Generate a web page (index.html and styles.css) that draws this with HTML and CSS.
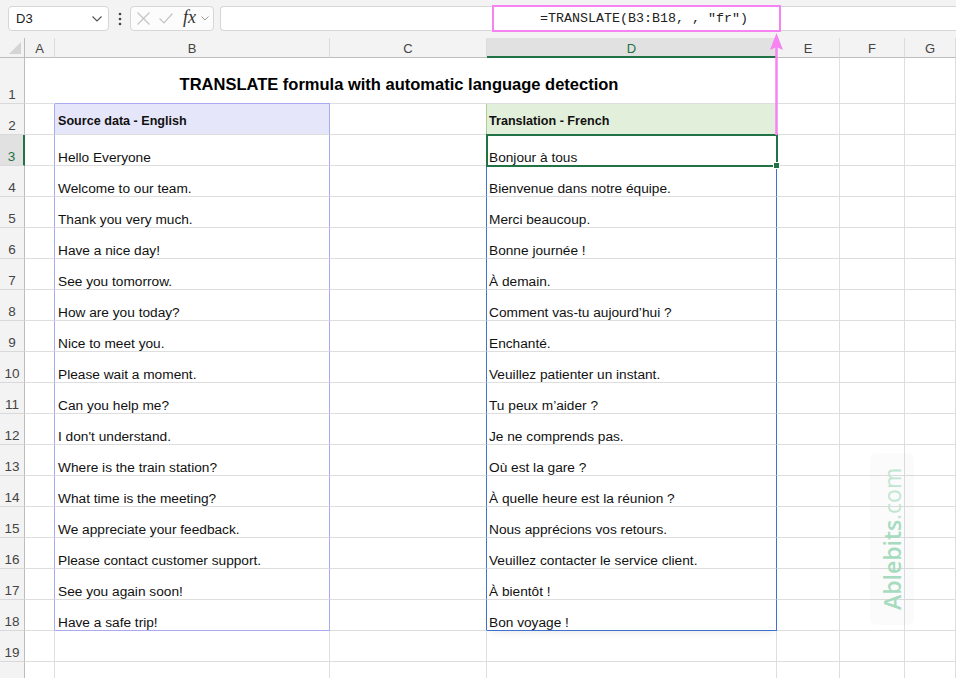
FILE: index.html
```html
<!DOCTYPE html>
<html lang="en">
<head>
    <meta charset="UTF-8">
    <meta name="viewport" content="width=device-width, initial-scale=1.0">
    <title>TRANSLATE formula</title>
    <link rel="stylesheet" href="styles.css">
</head>
<body>
    <div class="app">
        <div class="toolbar">
            <div class="name-box">
                <span>D3</span>
                <svg class="chev" width="10" height="6" viewBox="0 0 10 6"><polyline points="0.5,0.5 5,5 9.5,0.5" fill="none" stroke="#555" stroke-width="1.2"/></svg>
            </div>
            <svg class="dots" width="4" height="14" viewBox="0 0 4 14"><circle cx="2" cy="2" r="1.3" fill="#444"/><circle cx="2" cy="7" r="1.3" fill="#444"/><circle cx="2" cy="12" r="1.3" fill="#444"/></svg>
            <div class="func-box">
                <svg width="13" height="13" viewBox="0 0 13 13"><path d="M0.5 0.5 L12.5 12.5 M12.5 0.5 L0.5 12.5" stroke="#c4c4c4" stroke-width="1.2"/></svg>
                <svg width="14" height="11" viewBox="0 0 14 11"><polyline points="0.5,5.5 5,10 13.5,0.5" fill="none" stroke="#c4c4c4" stroke-width="1.2"/></svg>
                <span class="fx">fx</span>
                <svg width="8" height="5" viewBox="0 0 8 5"><polyline points="0.5,0.5 4,4 7.5,0.5" fill="none" stroke="#999" stroke-width="1"/></svg>
            </div>
            <div class="formula-input">=TRANSLATE(B3:B18, , "fr")</div>
        </div>

        <div class="sheet" id="sheet"></div>

        <div class="callout-box"></div>
        <svg class="callout-arrow" width="15" height="102" viewBox="0 0 15 102">
            <line x1="7.5" y1="12" x2="7.5" y2="102" stroke="#f783f2" stroke-width="2.5"/>
            <polygon points="7.5,0 14,17 7.5,14 1,17" fill="#f783f2"/>
        </svg>

        <div class="watermark"><span class="brand">Ablebits</span><span class="dotcom">.com</span></div>
    </div>

    <script>
        const english = [
            'Hello Everyone', 'Welcome to our team.', 'Thank you very much.', 'Have a nice day!',
            'See you tomorrow.', 'How are you today?', 'Nice to meet you.', 'Please wait a moment.',
            'Can you help me?', "I don't understand.", 'Where is the train station?', 'What time is the meeting?',
            'We appreciate your feedback.', 'Please contact customer support.', 'See you again soon!', 'Have a safe trip!'
        ];
        const french = [
            'Bonjour à tous', 'Bienvenue dans notre équipe.', 'Merci beaucoup.', 'Bonne journée !',
            'À demain.', 'Comment vas-tu aujourd’hui ?', 'Enchanté.', 'Veuillez patienter un instant.',
            'Tu peux m’aider ?', 'Je ne comprends pas.', 'Où est la gare ?', 'À quelle heure est la réunion ?',
            'Nous apprécions vos retours.', 'Veuillez contacter le service client.', 'À bientôt !', 'Bon voyage !'
        ];
        const cols = ['A', 'B', 'C', 'D', 'E', 'F', 'G'];
        const sheet = document.getElementById('sheet');

        function cell(cls, text) {
            const div = document.createElement('div');
            div.className = cls;
            if (text !== undefined) div.textContent = text;
            sheet.appendChild(div);
            return div;
        }

        cell('corner');
        cols.forEach(c => cell(c === 'D' ? 'col-head active' : 'col-head', c));

        for (let r = 1; r <= 20; r++) {
            cell(r === 3 ? 'row-head active' : 'row-head', r);

            if (r === 1) {
                cell('cell title', 'TRANSLATE formula with automatic language detection');
                cell('cell'); cell('cell'); cell('cell');
                continue;
            }

            if (r === 2) {
                cell('cell src-left');
                cell('cell src src-top src-head', 'Source data - English');
                cell('cell fr-left');
                cell('cell fr-head', 'Translation - French');
            } else if (r <= 18) {
                const last = r === 18 ? ' last' : '';
                cell('cell src-left');
                cell('cell src' + last, english[r - 3]);
                cell('cell dst-left');
                cell('cell dst' + last + (r === 3 ? ' selected' : ''), french[r - 3]);
            } else {
                cell('cell'); cell('cell'); cell('cell'); cell('cell');
            }
            cell('cell'); cell('cell'); cell('cell');
        }
    </script>
</body>
</html>
```

FILE: styles.css
```css
body {
    margin: 0;
    font-family: "Liberation Sans", Arial, sans-serif;
    background-color: #fff;
    overflow: hidden;
}

.app {
    position: relative;
    width: 956px;
    height: 678px;
    overflow: hidden;
}

/* formula bar */

.toolbar {
    height: 38px;
    background-color: #f3f3f3;
    display: flex;
    align-items: flex-start;
    padding: 6px 0 0 8px;
    box-sizing: border-box;
}

.name-box {
    width: 101px;
    height: 25px;
    box-sizing: border-box;
    background-color: #fff;
    border: 1px solid #d6d6d6;
    border-radius: 4px;
    display: flex;
    align-items: center;
    justify-content: space-between;
    padding: 0 6px 0 7px;
    font-size: 13px;
    color: #222;
}

.dots {
    margin: 6px 8px 0 9px;
}

.func-box {
    width: 84px;
    height: 25px;
    box-sizing: border-box;
    background-color: #fcfcfc;
    border: 1px solid #d6d6d6;
    border-radius: 4px;
    display: flex;
    align-items: center;
    padding: 0 3px 0 6px;
    gap: 9px;
}

.fx {
    font-family: "Liberation Serif", "Times New Roman", serif;
    font-style: italic;
    font-size: 18px;
    color: #333;
    margin: 0 -4px 3px 1px;
}

.formula-input {
    flex: 1;
    height: 25px;
    margin-left: 6px;
    box-sizing: border-box;
    background-color: #fff;
    border: 1px solid #d6d6d6;
    border-right: none;
    border-radius: 4px 0 0 4px;
    padding-left: 319px;
    font-family: "Liberation Mono", "Courier New", monospace;
    font-size: 13.33px;
    line-height: 24px;
    color: #222;
    white-space: pre;
}

/* grid */

.sheet {
    display: grid;
    grid-template-columns: 25px 30px 275px 157px 290px 63px 65px 1fr;
    grid-template-rows: 20px 46px repeat(19, 31px);
    font-size: 13.7px;
    color: #111;
}

.corner {
    background-color: #f3f3f3;
    border-right: 1px solid #bdbdbd;
    border-bottom: 1px solid #bdbdbd;
    position: relative;
}

.corner::after {
    content: "";
    position: absolute;
    right: 3px;
    bottom: 3px;
    border-style: solid;
    border-width: 0 0 12px 12px;
    border-color: transparent transparent #d4d4d4 transparent;
}

.col-head {
    background-color: #f3f3f3;
    border-right: 1px solid #dcdcdc;
    border-bottom: 1px solid #bdbdbd;
    display: flex;
    align-items: center;
    justify-content: center;
    padding-top: 2px;
    color: #444;
    font-size: 13px;
}

.col-head.active {
    background-color: #e1e1e1;
    border-bottom: 2px solid #217346;
    color: #217346;
}

.row-head {
    background-color: #f3f3f3;
    border-right: 1px solid #bdbdbd;
    border-bottom: 1px solid #d9d9d9;
    display: flex;
    align-items: flex-end;
    justify-content: center;
    padding-bottom: 1px;
    color: #444;
    font-size: 13.5px;
}

.row-head.active {
    background-color: #e1e1e1;
    border-right: 2px solid #217346;
    color: #217346;
}

.cell {
    box-sizing: border-box;
    border-right: 1px solid #dedede;
    border-bottom: 1px solid #dedede;
    display: flex;
    align-items: flex-end;
    padding: 0 3px 0 3px;
    white-space: nowrap;
    min-width: 0;
}

.title {
    grid-column: span 4;
    justify-content: center;
    font-size: 16.5px;
    font-weight: bold;
    color: #000;
    padding-bottom: 9px;
    padding-left: 0;
}

/* source range B2:B18 */

.src-left {
    border-right-color: #aaaaf0;
}

.src {
    border-right-color: #aaaaf0;
}

.src-top {
    box-shadow: 0 -1px 0 #aaaaf0;
}

.src-head {
    background-color: #e6e6fa;
    font-weight: bold;
    font-size: 12.6px;
    padding-bottom: 6px;
}

.src.last {
    border-bottom-color: #aaaaf0;
}

/* translated range D2:D18 */

.fr-left {
    border-right-color: #a9d08e;
}

.fr-head {
    background-color: #e2efda;
    border-right-color: #a9d08e;
    font-weight: bold;
    font-size: 12.6px;
    padding-bottom: 6px;
    padding-left: 2px;
}

.dst-left {
    border-right-color: #3f72d0;
}

.dst {
    border-right-color: #3f72d0;
    padding-left: 2px;
}

.dst.last {
    border-bottom-color: #3f72d0;
    box-shadow: 0 4px 8px -4px rgba(0, 0, 0, 0.12);
}

.selected {
    position: relative;
    outline: 2px solid #217346;
    outline-offset: -1px;
}

.selected::after {
    content: "";
    position: absolute;
    right: -4px;
    bottom: -4px;
    width: 5px;
    height: 5px;
    background-color: #217346;
    border: 1px solid #fff;
}

/* annotations */

.callout-box {
    position: absolute;
    left: 492px;
    top: 5px;
    width: 289px;
    height: 27px;
    box-sizing: border-box;
    border: 2px solid #f783f2;
}

.callout-arrow {
    position: absolute;
    left: 769px;
    top: 33px;
}

.watermark {
    position: absolute;
    left: 870px;
    top: 453px;
    width: 44px;
    height: 172px;
    box-sizing: border-box;
    background-color: rgba(0, 0, 0, 0.015);
    border-radius: 6px;
    writing-mode: vertical-rl;
    transform: rotate(180deg);
    display: flex;
    align-items: center;
    justify-content: center;
    font-family: "Open Sans", sans-serif;
    font-size: 23px;
}

.brand {
    color: #a6dbbf;
    font-weight: 600;
}

.dotcom {
    color: #c0e6d2;
}
```
